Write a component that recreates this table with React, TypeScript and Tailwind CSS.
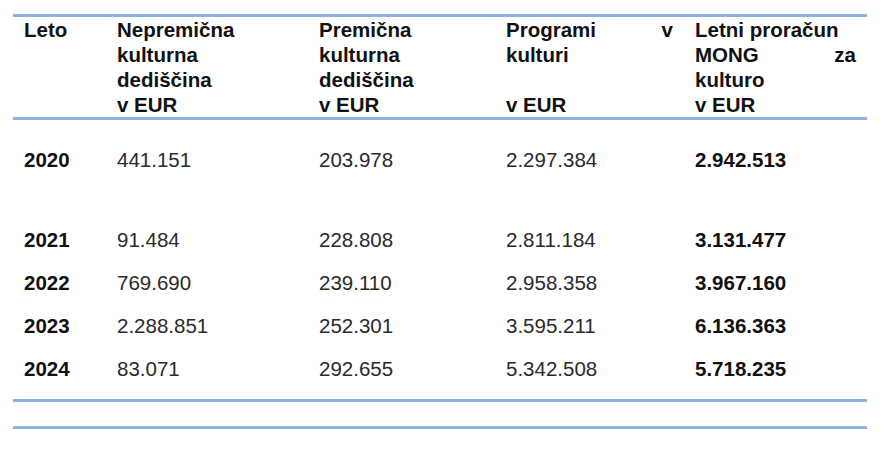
const rows = [
  { year: "2020", a: "441.151", b: "203.978", c: "2.297.384", total: "2.942.513", tall: true },
  { year: "2021", a: "91.484", b: "228.808", c: "2.811.184", total: "3.131.477" },
  { year: "2022", a: "769.690", b: "239.110", c: "2.958.358", total: "3.967.160" },
  { year: "2023", a: "2.288.851", b: "252.301", c: "3.595.211", total: "6.136.363" },
  { year: "2024", a: "83.071", b: "292.655", c: "5.342.508", total: "5.718.235" },
];

const cols = "grid grid-cols-[93px_202px_187px_189px_183px]";

const Rule = () => <div className="h-[3px] w-[854px] bg-[#8ab2e2]" />;

const App = () => {
  return (
    <div
      className="w-[887px] h-[450px] bg-white pl-[13px] pt-[14px]"
      style={{ fontFamily: '"Liberation Sans", Arial, sans-serif' }}
    >
      <Rule />
      <div className={`${cols} h-[100px] text-[20.5px] leading-[25px] font-bold text-[#111]`}>
        <div className="px-[11px]">Leto</div>
        <div className="px-[11px]">
          <div>Nepremična</div>
          <div>kulturna</div>
          <div>dediščina</div>
          <div>v EUR</div>
        </div>
        <div className="px-[11px]">
          <div>Premična</div>
          <div>kulturna</div>
          <div>dediščina</div>
          <div>v EUR</div>
        </div>
        <div className="px-[11px]">
          <div className="flex justify-between">
            <span>Programi</span>
            <span>v</span>
          </div>
          <div>kulturi</div>
          <div>&nbsp;</div>
          <div>v EUR</div>
        </div>
        <div className="px-[11px]">
          <div>Letni proračun</div>
          <div className="flex justify-between">
            <span>MONG</span>
            <span>za</span>
          </div>
          <div>kulturo</div>
          <div>v EUR</div>
        </div>
      </div>
      <Rule />
      <div className="pt-[27px] text-[20.5px] leading-[25px]">
        {rows.map((r) => (
          <div key={r.year} className={`${cols} ${r.tall ? "h-[80px]" : "h-[43px]"}`}>
            <div className="px-[11px] font-bold text-[#111]">{r.year}</div>
            <div className="px-[11px] text-[#2a2a2a]">{r.a}</div>
            <div className="px-[11px] text-[#2a2a2a]">{r.b}</div>
            <div className="px-[11px] text-[#2a2a2a]">{r.c}</div>
            <div className="px-[11px] font-bold text-[#111]">{r.total}</div>
          </div>
        ))}
      </div>
      <Rule />
      <div className="h-[24px]" />
      <Rule />
    </div>
  );
};

export default App;
